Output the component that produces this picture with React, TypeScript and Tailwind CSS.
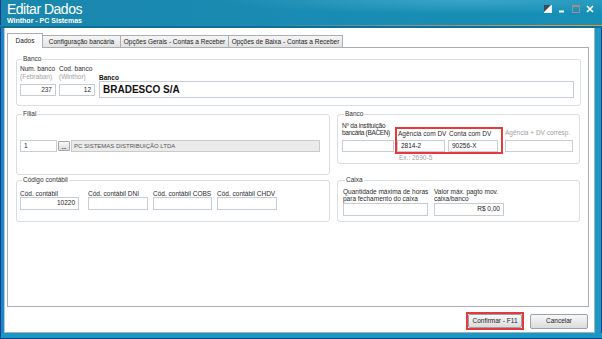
import React from "react";

function Field({
  className = "",
  children,
  right,
}: {
  className?: string;
  children?: React.ReactNode;
  right?: boolean;
}) {
  return (
    <div
      className={`border border-[#c6cdd4] bg-white flex items-center text-[6.5px] leading-none text-[#222] whitespace-nowrap ${
        right ? "justify-end pr-[3px]" : "pl-[3px]"
      } ${className}`}
    >
      {children}
    </div>
  );
}

function Group({
  title,
  className = "",
  children,
}: {
  title: string;
  className?: string;
  children?: React.ReactNode;
}) {
  return (
    <fieldset className={`min-w-0 border border-[#d9dee2] rounded-[3px] ${className}`}>
      <legend className="ml-[2px] px-[1px] text-[6.5px] leading-[8px] text-[#333]">{title}</legend>
      {children}
    </fieldset>
  );
}

function Lbl({ children, gray, className = "" }: { children: React.ReactNode; gray?: boolean; className?: string }) {
  return (
    <div className={`text-[6.5px] whitespace-nowrap ${gray ? "text-[#a2a2a2]" : "text-[#2a2a2a]"} ${className}`}>
      {children}
    </div>
  );
}

export default function App() {
  return (
    <div className="w-[602px] h-[339px] flex flex-col overflow-hidden bg-[#1893bf] font-['Liberation_Sans',Arial,sans-serif]">
      {/* Title bar */}
      <div className="h-[25px] flex justify-between border-l border-[#163c8e] bg-[radial-gradient(ellipse_60%_80%_at_78%_0%,rgba(120,210,235,0.35),transparent_70%),linear-gradient(to_right,#1a86ae,#1a8bb2_50%,#168fb6)]">
        <div className="pl-[6px] pt-[2px] flex flex-col text-white">
          <div className="text-[14px] leading-[15px] tracking-[-0.5px]">Editar Dados</div>
          <div className="text-[7px] font-bold leading-[8px]">Winthor - PC Sistemas</div>
        </div>
        <div className="flex items-start gap-[6px] pt-[5px] pr-[8px]">
          <svg width="8" height="8" viewBox="0 0 8 8">
            <rect x="0.5" y="0.5" width="7" height="7" fill="#fff" stroke="#e8f4f8" />
            <polygon points="0,0 7,0 0,7" fill="#3c4b55" />
          </svg>
          <svg width="8" height="8" viewBox="0 0 8 8">
            <rect x="1" y="5.5" width="5" height="2" fill="#fff" />
          </svg>
          <svg width="8" height="8" viewBox="0 0 8 8">
            <rect x="0.5" y="0.5" width="7" height="7" fill="none" stroke="#9d8f91" />
            <rect x="0.5" y="0.5" width="7" height="1.5" fill="#9d8f91" />
          </svg>
          <svg width="8" height="8" viewBox="0 0 8 8">
            <path d="M1 1 L7 7 M7 1 L1 7" stroke="#fff" strokeWidth="1.6" />
          </svg>
        </div>
      </div>
      <div className="h-px bg-linear-to-r from-[#1a88b0] via-[#1a88b0] via-45% to-[#f0941c]" />
      <div className="h-[2px] bg-[#0f6f96]" />

      {/* Body row */}
      <div className="flex-1 flex min-h-0">
        <div className="w-[4px] border-l border-[#163c8e] bg-[#1e87c8]" />
        <div className="flex-1 bg-white border-l border-[#b8c8d4] border-r border-b border-r-[#a9b0b6] border-b-[#a9b0b6] flex flex-col pt-[5px]">
          {/* Tabs */}
          <div className="h-[14px] ml-[2px] flex items-end text-[6.5px] text-[#222]">
            <div className="relative z-10 -mb-px h-[15px] w-[36px] bg-white border-l border-t border-r border-[#a9aeb3] flex items-center justify-center pb-[1px]">
              Dados
            </div>
            <div className="h-[12px] w-[78px] bg-linear-to-b from-[#f6f6f6] to-[#e2e2e2] border-t border-r border-[#a9aeb3] flex items-center justify-center">
              Configuração bancária
            </div>
            <div className="h-[12px] w-[108px] bg-linear-to-b from-[#f6f6f6] to-[#e2e2e2] border-t border-r border-[#a9aeb3] flex items-center justify-center">
              Opções Gerais - Contas a Receber
            </div>
            <div className="h-[12px] w-[114px] bg-linear-to-b from-[#f6f6f6] to-[#e2e2e2] border-t border-r border-[#a9aeb3] flex items-center justify-center">
              Opções de Baixa - Contas a Receber
            </div>
          </div>

          {/* Tab page */}
          <div className="flex-1 ml-[2px] mr-[5px] border border-[#a9aeb3] bg-white pt-[7px] pl-[8px] pr-[7px] flex flex-col">
            {/* Banco group */}
            <Group title="Banco" className="pl-[3px] pr-[6px] pt-[2px] pb-[7px]">
              <div className="flex items-end">
                <div className="flex flex-col w-[36px] mb-[2px]">
                  <Lbl className="leading-[8px]">Num. banco</Lbl>
                  <Lbl gray className="leading-[8px]">(Febraban)</Lbl>
                  <Field right className="h-[12px] mt-[3px] text-[#333]">237</Field>
                </div>
                <div className="flex flex-col w-[36px] ml-[3px] mb-[2px]">
                  <Lbl className="leading-[8px]">Cod. banco</Lbl>
                  <Lbl gray className="leading-[8px]">(Winthor)</Lbl>
                  <Field right className="h-[12px] mt-[3px]">12</Field>
                </div>
                <div className="flex flex-col flex-1 ml-[4px]">
                  <div className="text-[6.5px] leading-[7px] font-bold text-[#111]">Banco</div>
                  <div className="h-[17px] border border-[#c6cdd4] bg-white flex items-center pl-[3px] text-[10px] font-bold text-[#111]">
                    BRADESCO S/A
                  </div>
                </div>
              </div>
            </Group>

            <div className="mt-[4px] grid grid-cols-[314px_243px] gap-x-[7px] gap-y-px">
              {/* Filial */}
              <Group title="Filial" className="pl-[3px] pr-[9px] pt-[22px] pb-[22px]">
                <div className="flex items-center h-[12px]">
                  <Field className="w-[37px] h-[12px]">1</Field>
                  <div className="ml-px w-[12px] h-[10px] border border-[#9da4aa] rounded-[1px] bg-linear-to-b from-[#f8f8f8] to-[#dcdcdc] flex items-end justify-center text-[6px] leading-[6px] text-[#222] font-bold">
                    ...
                  </div>
                  <div className="ml-px flex-1 h-[12px] border border-[#cacaca] bg-[#ebebeb] flex items-center pl-[2px] text-[6px] text-[#555] whitespace-nowrap">
                    PC SISTEMAS DISTRIBUIÇÃO LTDA
                  </div>
                </div>
              </Group>

              {/* Banco right */}
              <Group title="Banco" className="self-start pl-[4px] pr-[6px] pt-[4px] pb-[2px]">
                <div className="grid grid-cols-[52px_auto_69px] items-end gap-x-[1px]">
                  <div className="flex flex-col mb-[2px]">
                    <Lbl className="leading-[7px] tracking-[-0.2px]">Nº da instituição</Lbl>
                    <Lbl className="leading-[7px] tracking-[-0.35px]">bancária (BACEN)</Lbl>
                    <Field className="h-[12px] mt-[4px]" />
                  </div>
                  <div className="border-2 border-[#e4393d] flex pt-[1px] pr-[2px]">
                    <div className="flex flex-col w-[48px]">
                      <Lbl className="leading-[7px] pl-[1px]">Agência com DV</Lbl>
                      <Field className="h-[12px] mt-[3px]">2814-2</Field>
                    </div>
                    <div className="flex flex-col w-[50px] ml-[3px]">
                      <Lbl className="leading-[7px] pl-[1px]">Conta com DV</Lbl>
                      <Field className="h-[12px] mt-[3px]">90256-X</Field>
                    </div>
                  </div>
                  <div className="flex flex-col mb-[2px] ml-px">
                    <Lbl gray className="leading-[7px]">Agência + DV corresp.</Lbl>
                    <Field className="h-[12px] mt-[4px]" />
                  </div>
                  <div className="col-start-2 pl-[4px] text-[6.5px] leading-[7px] text-[#a2a2a2]">Ex.: 2690-5</div>
                </div>
              </Group>

              {/* Código contábil */}
              <Group title="Código contábil" className="pl-[3px] pt-[6px] pb-[11px]">
                <div className="flex">
                  <div className="flex flex-col w-[59px]">
                    <Lbl className="leading-[7px]">Cód. contábil</Lbl>
                    <Field right className="h-[13px]">10220</Field>
                  </div>
                  <div className="flex flex-col w-[60px] ml-[9px]">
                    <Lbl className="leading-[7px]">Cód. contábil DNI</Lbl>
                    <Field className="h-[13px]" />
                  </div>
                  <div className="flex flex-col w-[59px] ml-[5px]">
                    <Lbl className="leading-[7px]">Cód. contábil COBS</Lbl>
                    <Field className="h-[13px]" />
                  </div>
                  <div className="flex flex-col w-[60px] ml-[5px]">
                    <Lbl className="leading-[7px]">Cód. contábil CHDV</Lbl>
                    <Field className="h-[13px]" />
                  </div>
                </div>
              </Group>

              {/* Caixa */}
              <Group title="Caixa" className="pl-[5px] pt-[5px] pb-[5px]">
                <div className="flex">
                  <div className="flex flex-col w-[85px]">
                    <Lbl className="leading-[6.5px]">Quantidade máxima de horas</Lbl>
                    <Lbl className="leading-[6.5px]">para fechamento do caixa</Lbl>
                    <Field className="h-[13px] mt-px" />
                  </div>
                  <div className="flex flex-col w-[70px] ml-[6px]">
                    <Lbl className="leading-[6.5px]">Valor máx. pagto mov.</Lbl>
                    <Lbl className="leading-[6.5px]">caixa/banco</Lbl>
                    <Field right className="h-[13px] mt-px">R$ 0,00</Field>
                  </div>
                </div>
              </Group>
            </div>
          </div>

          {/* Buttons */}
          <div className="flex justify-end items-center gap-[6px] pr-[6px] pt-[5px] pb-[2px]">
            <div className="border-2 border-[#e4393d]">
              <div className="w-[54px] h-[14px] border border-[#9aa2a8] rounded-[2px] bg-linear-to-b from-[#f8f8f8] to-[#dcdcdc] flex items-center justify-center text-[6.5px] text-[#222]">
                Confirmar - F11
              </div>
            </div>
            <div className="w-[58px] h-[15px] border border-[#9aa2a8] rounded-[2px] bg-linear-to-b from-[#f8f8f8] to-[#dcdcdc] flex items-center justify-center text-[6.5px] text-[#222]">
              Cancelar
            </div>
          </div>
        </div>
        <div className="w-[7px] bg-[#1a98c4] border-r border-[#163c8e]" />
      </div>
      <div className="h-[6px] bg-[#1a98c4] border-b border-l border-[#163c8e]" />
    </div>
  );
}
